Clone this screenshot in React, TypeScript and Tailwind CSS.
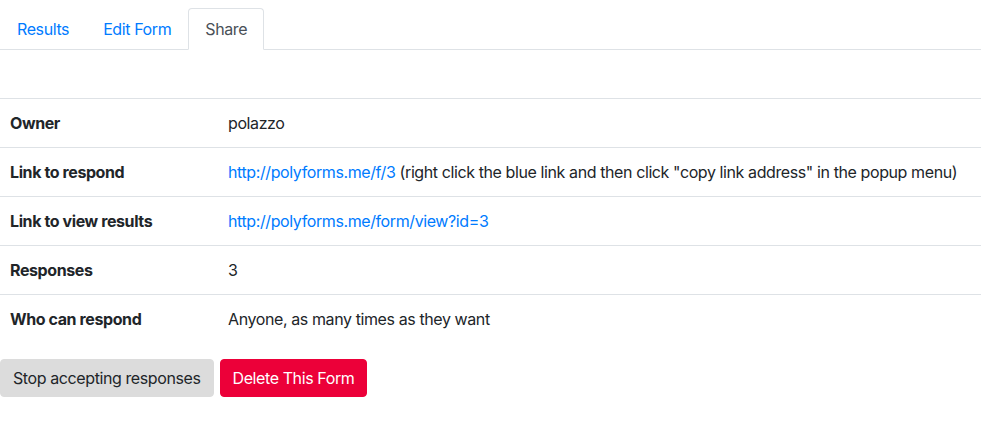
import React from "react";

export default function App() {
  const tabs = [
    { label: "Results", active: false },
    { label: "Edit Form", active: false },
    { label: "Share", active: true },
  ];

  return (
    <div
      className="w-[981px] h-[432px] bg-white text-[16px] leading-6 tracking-[-0.4px] text-[#212529]"
      style={{ fontFamily: "Inter, 'Noto Sans', sans-serif" }}
    >
      {/* Tabs */}
      <div className="flex pt-2 border-b border-[#dee2e6]">
        {tabs.map((tab) => (
          <a
            key={tab.label}
            href="#"
            className={`-mb-px px-4 py-2 border rounded-t ${
              tab.active
                ? "text-[#495057] bg-white border-[#dee2e6] border-b-white"
                : "text-[#007bff] border-transparent"
            }`}
          >
            {tab.label}
          </a>
        ))}
      </div>

      {/* Share table */}
      <table className="w-full mt-12 border-collapse">
        <tbody>
          <tr className="border-t border-[#dee2e6]">
            <th className="w-[216px] p-3 pl-[10px] text-left font-bold">Owner</th>
            <td className="p-3">polazzo</td>
          </tr>
          <tr className="border-t border-[#dee2e6]">
            <th className="p-3 pl-[10px] text-left font-bold">Link to respond</th>
            <td className="p-3 whitespace-nowrap">
              <a href="#" className="text-[#007bff]">
                http://polyforms.me/f/3
              </a>{" "}
              (right click the blue link and then click "copy link address" in the popup menu)
            </td>
          </tr>
          <tr className="border-t border-[#dee2e6]">
            <th className="p-3 pl-[10px] text-left font-bold">Link to view results</th>
            <td className="p-3">
              <a href="#" className="text-[#007bff]">
                http://polyforms.me/form/view?id=3
              </a>
            </td>
          </tr>
          <tr className="border-t border-[#dee2e6]">
            <th className="p-3 pl-[10px] text-left font-bold">Responses</th>
            <td className="p-3">3</td>
          </tr>
          <tr className="border-t border-[#dee2e6]">
            <th className="p-3 pl-[10px] text-left font-bold">Who can respond</th>
            <td className="p-3">Anyone, as many times as they want</td>
          </tr>
        </tbody>
      </table>

      {/* Actions */}
      <div className="flex gap-[6px] mt-4">
        <button className="px-3 py-1.5 border border-[#dcdcdc] bg-[#dcdcdc] rounded text-[#212529]">
          Stop accepting responses
        </button>
        <button className="px-3 py-1.5 border border-[#ec0039] bg-[#ec0039] rounded text-white">
          Delete This Form
        </button>
      </div>
    </div>
  );
}
